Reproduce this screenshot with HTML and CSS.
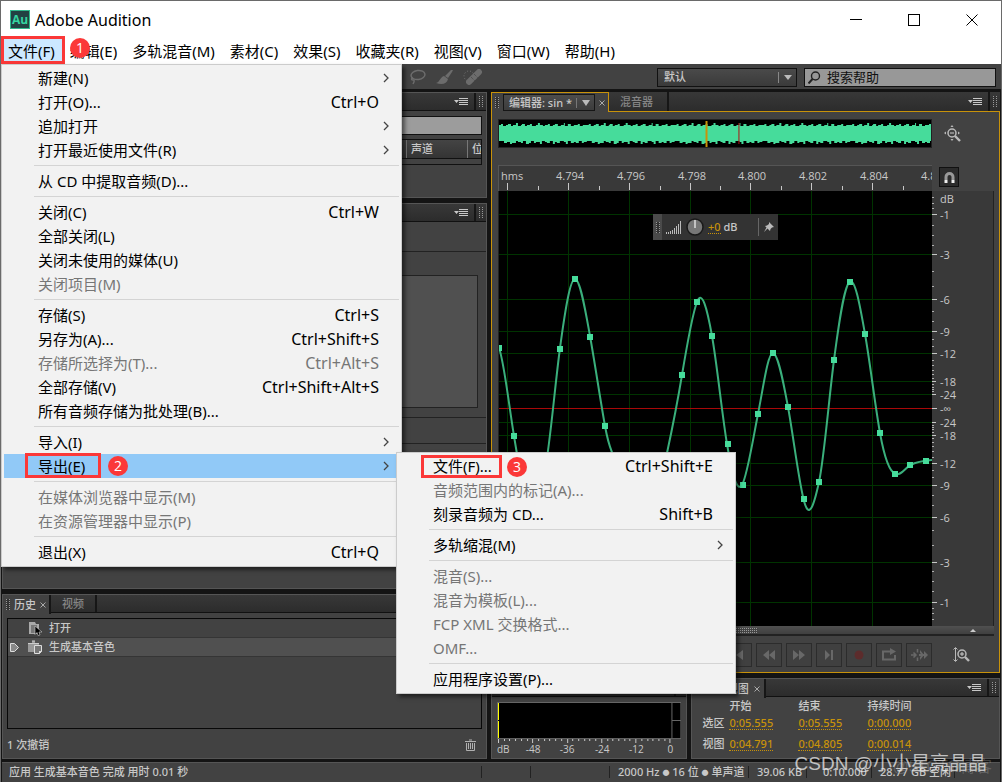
FILE: index.html
```html
<!DOCTYPE html>
<html lang="zh-CN">
<head>
<meta charset="utf-8">
<title>Adobe Audition</title>
<link rel="stylesheet" href="styles.css">
</head>
<body>
<svg class="defs" width="0" height="0" aria-hidden="true">
  <defs>
    <symbol id="panel-menu" viewBox="0 0 14 8"><path d="M0 2h5L2.500 5zM5 0h9v1H5zM5 2h9v1H5zM5 4h9v1H5zM5 6h9v1H5z" fill="#c8c8c8"/></symbol>
    <symbol id="arrow" viewBox="0 0 6 10"><path d="M1 1l4 4-4 4" fill="none" stroke="#444" stroke-width="1.300"/></symbol>
    <symbol id="close" viewBox="0 0 6 6"><path d="M.5.500l5 5m0-5l-5 5" stroke="#aaa" fill="none"/></symbol>
  </defs>
</svg>
<div class="window">
  <header class="titlebar">
    <span class="logo">Au</span>
    <h1 class="title">Adobe Audition</h1>
    <div class="captions">
      <button class="caption" aria-label="最小化"><svg width="12" height="12"><path d="M0 5.500h12" stroke="#000"/></svg></button>
      <button class="caption" aria-label="最大化"><svg width="12" height="12"><rect x=".5" y=".5" width="11" height="11" fill="none" stroke="#000"/></svg></button>
      <button class="caption" aria-label="关闭"><svg width="12" height="12"><path d="M.5.500l11 11m0-11l-11 11" stroke="#000" fill="none"/></svg></button>
    </div>
  </header>

  <nav class="menubar">
    <button class="menu-title open">文件(F)</button>
    <button class="menu-title">编辑(E)</button>
    <button class="menu-title">多轨混音(M)</button>
    <button class="menu-title">素材(C)</button>
    <button class="menu-title">效果(S)</button>
    <button class="menu-title">收藏夹(R)</button>
    <button class="menu-title">视图(V)</button>
    <button class="menu-title">窗口(W)</button>
    <button class="menu-title">帮助(H)</button>
    <span class="badge badge-one">1</span>

    <ul class="menu file-menu">
      <li><button class="item">新建(N)<svg class="more" width="6" height="10"><use href="#arrow"/></svg></button></li>
      <li><button class="item">打开(O)...<kbd>Ctrl+O</kbd></button></li>
      <li><button class="item">追加打开<svg class="more" width="6" height="10"><use href="#arrow"/></svg></button></li>
      <li><button class="item">打开最近使用文件(R)<svg class="more" width="6" height="10"><use href="#arrow"/></svg></button></li>
      <li class="separator"></li>
      <li><button class="item">从 CD 中提取音频(D)...</button></li>
      <li class="separator"></li>
      <li><button class="item">关闭(C)<kbd>Ctrl+W</kbd></button></li>
      <li><button class="item">全部关闭(L)</button></li>
      <li><button class="item">关闭未使用的媒体(U)</button></li>
      <li><button class="item" disabled>关闭项目(M)</button></li>
      <li class="separator"></li>
      <li><button class="item">存储(S)<kbd>Ctrl+S</kbd></button></li>
      <li><button class="item">另存为(A)...<kbd>Ctrl+Shift+S</kbd></button></li>
      <li><button class="item" disabled>存储所选择为(T)...<kbd>Ctrl+Alt+S</kbd></button></li>
      <li><button class="item">全部存储(V)<kbd>Ctrl+Shift+Alt+S</kbd></button></li>
      <li><button class="item">所有音频存储为批处理(B)...</button></li>
      <li class="separator"></li>
      <li><button class="item">导入(I)<svg class="more" width="6" height="10"><use href="#arrow"/></svg></button></li>
      <li class="parent">
        <button class="item selected">导出(E)<svg class="more" width="6" height="10"><use href="#arrow"/></svg></button>
        <span class="mark mark-export"></span><span class="badge badge-two">2</span>
        <ul class="menu export-menu">
          <li class="parent"><button class="item">文件(F)...<kbd>Ctrl+Shift+E</kbd></button>
            <span class="mark mark-file"></span><span class="badge badge-three">3</span></li>
          <li><button class="item" disabled>音频范围内的标记(A)...</button></li>
          <li><button class="item">刻录音频为 CD...<kbd>Shift+B</kbd></button></li>
          <li class="separator"></li>
          <li><button class="item">多轨缩混(M)<svg class="more" width="6" height="10"><use href="#arrow"/></svg></button></li>
          <li class="separator"></li>
          <li><button class="item" disabled>混音(S)...</button></li>
          <li><button class="item" disabled>混音为模板(L)...</button></li>
          <li><button class="item" disabled>FCP XML 交换格式...</button></li>
          <li><button class="item" disabled>OMF...</button></li>
          <li class="separator"></li>
          <li><button class="item">应用程序设置(P)...</button></li>
        </ul>
      </li>
      <li class="separator"></li>
      <li><button class="item" disabled>在媒体浏览器中显示(M)</button></li>
      <li><button class="item" disabled>在资源管理器中显示(P)</button></li>
      <li class="separator"></li>
      <li><button class="item">退出(X)<kbd>Ctrl+Q</kbd></button></li>
    </ul>
  </nav>

  <div class="toolbar">
    <div class="tools">
      <button class="tool" aria-label="套索"><svg width="18" height="16"><ellipse cx="9" cy="6" rx="7" ry="4.500" fill="none" stroke="#6c6c6c" stroke-width="1.500" transform="rotate(-8 9 6)"/><path d="M4 9c-2 0-2 2 0 2s1 2 0 4" fill="none" stroke="#6c6c6c" stroke-width="1.500"/></svg></button>
      <button class="tool" aria-label="画笔"><svg width="18" height="16"><path d="M17 1l-1 2-4 6-3-2 6-6zM8 7l4 3c-1 5-6 6-12 4 4-1 4-6 8-7z" fill="#6c6c6c"/></svg></button>
      <button class="tool" aria-label="修复"><svg width="20" height="16"><circle cx="6" cy="7" r="5" fill="none" stroke="#777" stroke-dasharray="1 2"/><rect x="1" y="5" width="20" height="6" rx="3" fill="#6c6c6c" transform="rotate(-45 11 8)"/><path d="M8 8l4 4M11 5l4 4" stroke="#444" stroke-dasharray="1 1"/></svg></button>
    </div>
    <div class="workspace-pick">
      <select class="workspace-select" aria-label="工作区"><option>默认</option></select>
    </div>
    <label class="search"><svg width="13" height="13"><circle cx="7.500" cy="5" r="4" fill="none" stroke="#222" stroke-width="1.400"/><path d="M4.500 8L.5 12.500" stroke="#222" stroke-width="2"/></svg><input class="search-box" type="text" value="搜索帮助" aria-label="搜索帮助"></label>
  </div>

  <main class="workspace">
    <div class="side">
      <section class="panel files">
        <div class="tabs"><span class="tab-space"></span><button class="panel-menu" aria-label="面板菜单"><svg width="14" height="8"><use href="#panel-menu"/></svg></button><span class="grip-cell"><i class="grip"></i></span></div>
        <div class="files-body">
          <input class="filter" type="text" aria-label="筛选">
          <div class="list-head"><span class="col">声道</span><span class="col last">位</span></div>
          <div class="list-foot"></div>
        </div>
      </section>
      <section class="panel media">
        <div class="tabs"><span class="tab-space"></span><button class="panel-menu" aria-label="面板菜单"><svg width="14" height="8"><use href="#panel-menu"/></svg></button><span class="grip-cell"><i class="grip"></i></span></div>
        <div class="media-body">
          <div class="media-bar"></div>
          <div class="media-view"></div>
          <div class="media-bar"></div>
          <div class="media-rest"></div>
        </div>
      </section>
      <section class="panel history">
        <div class="tabs">
          <button class="tab current"><i class="grip"></i>历史<svg width="6" height="6"><use href="#close"/></svg></button>
          <button class="tab plain">视频</button>
          <span class="tab-space"></span>
        </div>
        <div class="history-body">
          <ul class="history-list">
            <li class="step"><span class="pointer"></span><svg width="15" height="15"><path d="M1 1h6l1 2h3v10H1z" fill="#aaa"/><path d="M3 5h6M3 7h6M3 9h5M3 11h5" stroke="#444"/><path d="M7 5l7 6h-3l1 3-2 .5-1-3-2 2z" fill="#000" stroke="#ccc" stroke-width=".6"/></svg>打开</li>
            <li class="step active"><svg class="pointer" width="9" height="9"><path d="M.5.500h4l4 4-4 4h-4z" fill="#888" stroke="#ddd"/></svg><svg width="15" height="15"><path d="M0 3h4V1h3v2h4v9H0z" fill="#999"/><path d="M0 3.500h11M4 1h3" stroke="#ccc"/><path d="M6.500 5.500h7v6l-2 2h-5z" fill="#777" stroke="#ddd"/><path d="M11 14v-3h3" fill="#ddd"/></svg>生成基本音色</li>
          </ul>
          <div class="history-foot"><span>1 次撤销</span><button class="trash" aria-label="删除"><svg width="11" height="12"><path d="M0 2.500h11M4 1h3M1.500 4v7.500h8V4M3.500 4v6M5.500 4v6M7.500 4v6" fill="none" stroke="#b0b0b0"/></svg></button></div>
        </div>
      </section>
    </div>

    <div class="stage">
      <section class="panel editor">
        <div class="tabs">
          <div class="editor-tab"><i class="grip"></i><button class="editor-name">编辑器: sin *<span class="drop"><span class="caret"></span></span></button><svg width="6" height="6"><use href="#close"/></svg></div>
          <button class="tab mixer">混音器</button>
          <span class="tab-space"></span>
          <button class="panel-menu" aria-label="面板菜单"><svg width="14" height="8"><use href="#panel-menu"/></svg></button><span class="grip-cell"><i class="grip"></i></span>
        </div>
        <div class="editor-body">
          <div class="overview">
            <svg class="fill" viewBox="0 0 433 27" preserveAspectRatio="none">
              <defs><pattern id="noise" width="88" height="27" patternUnits="userSpaceOnUse"><path fill="#46dc9b" d="M0 5h2V4h2v2h3V5h2V4h3v2h2V5h3V3h2v3h3V5h1V4h3v2h2V5h3V4h2v2h4V5h2V3h2v2h3v1h2V5h3V4h2v2h3V5h2V4h3v2h3V5h3V3h1v3h3V4h3v2h3V5h4V4h2v2h3V5h4v17h-3v1h-2v-2h-3v2h-3v-1h-2v1h-3v-2h-3v3h-2v-2h-2v-1h-4v2h-3v-1h-2v2h-2v-3h-3v2h-3v-1h-2v-1h-3v3h-2v-2h-4v1h-2v-2h-3v2h-2v1h-3v-3h-3v2h-2v-1h-3v-1h-2v2h-4v1h-2v-2h-3v1h-3V21H0z"/></pattern></defs>
              <rect width="433" height="27" fill="url(#noise)"/><path d="M240.500 3v21" stroke="#b01010"/><path d="M208 1v26" stroke="#c8920a" stroke-width="2"/>
            </svg>
          </div>
          <button class="zoom-full" aria-label="全部缩小"><svg width="17" height="17"><circle cx="8" cy="8" r="4" fill="none" stroke="#bbb" stroke-width="1.500"/><path d="M6 8h4" stroke="#ccc"/><path d="M11 11l5 5" stroke="#bbb" stroke-width="2.400"/><path d="M6.500 2h3L8 0zM6.500 14h3L8 16zM2 6.500v3L0 8zM14 6.500v3L16 8z" fill="#bbb"/></svg></button>
          <div class="ruler">
            <svg class="fill" viewBox="499 166 433 25" preserveAspectRatio="xMinYMin slice">
              <path d="M507.500 183v7M568.500 183v7M629.500 183v7M690.500 183v7M750.500 183v7M811.500 183v7M872.500 183v7M538.500 186v4M599.500 186v4M660.500 186v4M720.500 186v4M781.500 186v4M842.500 186v4M903.500 186v4" stroke="#c8c8c8"/>
              <g class="axis"><text x="501" y="180">hms</text><text x="556" y="180">4.794</text><text x="617" y="180">4.796</text><text x="678" y="180">4.798</text><text x="738" y="180">4.800</text><text x="799" y="180">4.802</text><text x="860" y="180">4.804</text><text x="921" y="180">4.806</text></g>
            </svg>
          </div>
          <button class="snap" aria-label="吸附"><svg width="11" height="11"><path d="M2 8V5a3.500 3.500 0 0 1 7 0v3" fill="none" stroke="#999" stroke-width="3"/><path d="M.5 9.500h3M7.500 9.500h3" stroke="#eee" stroke-width="3"/></svg></button>
          <div class="plot">
            <svg class="fill" viewBox="499 191 433 435" preserveAspectRatio="none">
              <path d="M507.500 191v436M568.500 191v436M629.500 191v436M690.500 191v436M750.500 191v436M811.500 191v436M872.500 191v436M499 214.500h433M499 254.500h433M499 299.500h433M499 331.500h433M499 353.500h433M499 381.500h433M499 394.500h433M499 422.500h433M499 435.500h433M499 463.500h433M499 485.500h433M499 517.500h433M499 562.500h433M499 602.500h433" stroke="#003300"/>
              <path d="M499 408.500h433" stroke="#a80808"/>
              <path fill="none" stroke="#3aaf7c" stroke-width="2" d="M499 348C504 361 509 406 514 436S524 500 529 505S540 495 545 470S555 385 560 348S570 279 575 279S585 308 590 336S600 398 605 426S616 460 621 468S641 486 651 485S664 467 667 453S677 405 682 375S692 315 697 302C702 289 707 308 712 336S722 414 727 444S737 493 742 485S753 439 758 414S768 352 773 353S783 380 788 407S798 476 803.500 499S814 505 819 482S829 398 834 360S844 287 849.500 282S860 306 865 334S875 405 880 433S890 472 895.500 474S905 468 910.500 465S920 461 932 460"/>
              <path fill="#46dc9b" d="M499 345h3v6h-3zM511 433h6v6h-6zM557 346h6v6h-6zM572 276h6v6h-6zM587 334h6v6h-6zM602 423h6v6h-6zM679 372h6v6h-6zM694 299h6v6h-6zM709 333h6v6h-6zM725 441h6v6h-6zM740 482h6v6h-6zM755 411h6v6h-6zM770 350h6v6h-6zM785 404h6v6h-6zM801 496h6v6h-6zM816 479h6v6h-6zM831 357h6v6h-6zM847 279h6v6h-6zM862 331h6v6h-6zM877 430h6v6h-6zM892 471h6v6h-6zM907 462h6v6h-6zM923 458h6v6h-6z"/>
            </svg>
            <div class="hud">
              <span class="hud-grip"><i class="grip"></i></span>
              <svg width="16" height="13"><path d="M.5 11v2M2.500 11v2M4.500 10v3M6.500 9v4M8.500 7v6M10.500 5v8M12.500 3v10M14.500 0v13" stroke="#bbb"/></svg>
              <svg width="18" height="18"><circle cx="9" cy="9" r="8" fill="#777" stroke="#1a1a1a" stroke-width="1.500"/><path d="M9 2v8" stroke="#ddd" stroke-width="1.500"/></svg>
              <span class="gain"><button class="value">+0</button> dB</span>
              <button class="pin" aria-label="固定"><svg width="10" height="10"><path d="M5 0l5 5-2 .5-1.500 1.500L6 9 3.500 6.500 0 10l2.500-4.500L1 4l2-.5L5 2z" fill="#bbb"/></svg></button>
            </div>
          </div>
          <div class="scale">
            <svg class="fill" viewBox="932 191 61 435" preserveAspectRatio="xMinYMin meet">
              <path stroke="#c8c8c8" d="M932 214.500h5M932 254.500h5M932 299.500h5M932 331.500h5M932 353.500h5M932 381.500h4M932 394.500h4M932 408.500h5M932 422.500h4M932 435.500h4M932 463.500h5M932 485.500h5M932 517.500h5M932 562.500h5M932 602.500h5"/>
              <path stroke="#b0b0b0" d="M932 197.500h2M932 203.500h2M932 208.500h2M932 225.500h2M932 235.500h2M932 245.500h2M932 271.500h2M932 286.500h2M932 311.500h2M932 321.500h2M932 339.500h2M932 346.500h2M932 360.500h2M932 365.500h2M932 370.500h2M932 374.500h2M932 378.500h2M932 384.500h2M932 387.500h2M932 389.500h2M932 391.500h2M932 425.500h2M932 427.500h2M932 429.500h2M932 432.500h2M932 438.500h2M932 442.500h2M932 446.500h2M932 451.500h2M932 457.500h2M932 470.500h2M932 477.500h2M932 495.500h2M932 505.500h2M932 530.500h2M932 545.500h2M932 571.500h2M932 581.500h2M932 591.500h2M932 608.500h2M932 613.500h2M932 619.500h2"/>
              <g class="axis"><text x="940" y="203">dB</text><text x="940" y="219">-1</text><text x="940" y="259">-3</text><text x="940" y="304">-6</text><text x="940" y="336">-9</text><text x="940" y="358">-12</text><text x="940" y="386">-18</text><text x="940" y="399">-24</text><text x="940" y="413">-∞</text><text x="940" y="427">-24</text><text x="940" y="440">-18</text><text x="940" y="468">-12</text><text x="940" y="490">-9</text><text x="940" y="522">-6</text><text x="940" y="567">-3</text><text x="940" y="607">-1</text></g>
            </svg>
          </div>
          <div class="hscroll"><i class="dots"></i><span class="up"></span></div>
          <div class="transport">
            <button class="key" aria-label="播放"><svg width="20" height="14"><path d="M5 1l10 6-10 6z" fill="#686868"/></svg></button>
            <button class="key" aria-label="转到开头"><svg width="20" height="14"><path d="M14 2v10L7 7zM4 2h2v10H4z" fill="#686868"/></svg></button>
            <button class="key" aria-label="快退"><svg width="20" height="14"><path d="M10 2v10L4 7zM16 2v10l-6-5z" fill="#686868"/></svg></button>
            <button class="key" aria-label="快进"><svg width="20" height="14"><path d="M4 2v10l6-5zM10 2v10l6-5z" fill="#686868"/></svg></button>
            <button class="key" aria-label="转到结尾"><svg width="20" height="14"><path d="M6 2v10l5-5zM12 2h2v10h-2z" fill="#686868"/></svg></button>
            <button class="key" aria-label="录音"><svg width="20" height="14"><circle cx="10" cy="7" r="4.500" fill="#5c2c2c"/></svg></button>
            <button class="key" aria-label="循环"><svg width="20" height="14"><path d="M8 3.500H4v8h12V7" fill="none" stroke="#686868" stroke-width="2"/><path d="M8 2.500h3V0l6 3.500L11 7V4.500H8z" fill="#686868"/></svg></button>
            <button class="key" aria-label="跳过选区"><svg width="20" height="14"><path d="M2 7h4M4.500 4.500L7 7 4.500 9.500M8.500 1v3.500M8.500 9.500V13" fill="none" stroke="#686868" stroke-width="1.500"/><path d="M10 7h5" stroke="#686868" stroke-width="2"/><path d="M11 2l4 5-4 5v-3l2-2-2-2zM15 3l4 4-4 4z" fill="#686868"/></svg></button>
            <button class="zoom-amp" aria-label="放大振幅"><svg width="17" height="16"><path d="M2.500 1v13M.5 2.500l2-2 2 2M.5 12.500l2 2 2-2" fill="none" stroke="#b8b8b8"/><circle cx="9" cy="7" r="4" fill="none" stroke="#b8b8b8" stroke-width="1.500"/><path d="M7 7h4M9 5v4" stroke="#ccc"/><path d="M12 10l4 4" stroke="#b8b8b8" stroke-width="2.400"/></svg></button>
          </div>
        </div>
      </section>

      <div class="lower">
        <section class="panel levels">
          <div class="tabs"><span class="tab-space"></span><span class="grip-cell"></span></div>
          <div class="levels-body">
            <svg class="fill" viewBox="497 702 184 54" preserveAspectRatio="xMinYMin meet">
              <rect x="497.500" y="702.500" width="183" height="36" fill="#000" stroke="#666"/>
              <path d="M671.500 703v35M671.500 720.500h9" stroke="#666"/><path d="M498.500 703v17M498.500 721v17" stroke="#ff0"/>
              <path stroke="#c8c8c8" d="M498.500 739v4M532.500 739v4M567.500 739v4M601.500 739v4M635.500 739v4M669.500 739v4M504.500 739v2M509.500 739v2M515.500 739v2M521.500 739v2M527.500 739v2M538.500 739v2M544.500 739v2M549.500 739v2M555.500 739v2M561.500 739v2M572.500 739v2M578.500 739v2M584.500 739v2M589.500 739v2M595.500 739v2M607.500 739v2M612.500 739v2M618.500 739v2M624.500 739v2M629.500 739v2M641.500 739v2M647.500 739v2M652.500 739v2M658.500 739v2M664.500 739v2"/>
              <g class="axis small"><text x="497" y="753">dB</text><text x="533" y="753" text-anchor="middle">-48</text><text x="567" y="753" text-anchor="middle">-36</text><text x="602" y="753" text-anchor="middle">-24</text><text x="636" y="753" text-anchor="middle">-12</text><text x="670" y="753" text-anchor="middle">0</text></g>
            </svg>
          </div>
        </section>
        <section class="panel times">
          <div class="tabs">
            <button class="tab current wide">选区/视图<svg width="6" height="6"><use href="#close"/></svg></button>
            <span class="tab-space"></span><button class="panel-menu" aria-label="面板菜单"><svg width="14" height="8"><use href="#panel-menu"/></svg></button><span class="grip-cell"><i class="grip"></i></span>
          </div>
          <table class="time-table">
            <thead><tr><td></td><th>开始</th><th>结束</th><th>持续时间</th></tr></thead>
            <tbody>
              <tr><th>选区</th><td><button class="value">0:05.555</button></td><td><button class="value">0:05.555</button></td><td><button class="value">0:00.000</button></td></tr>
              <tr><th>视图</th><td><button class="value">0:04.791</button></td><td><button class="value">0:04.805</button></td><td><button class="value">0:00.014</button></td></tr>
            </tbody>
          </table>
        </section>
      </div>
    </div>
  </main>

  <footer class="status">
    <span class="message">应用 生成基本音色 完成 用时 0.01 秒</span>
    <span class="cell slot-small"></span><span class="cell slot-large"></span>
    <span class="cell format">2000 Hz <i class="bullet">●</i> 16 位 <i class="bullet">●</i> 单声道</span>
    <span class="cell size">39.06 KB</span>
    <span class="cell length">0:10.000</span>
    <span class="cell free">28.77 GB 空闲</span>
    <span class="cell end"></span>
  </footer>
  <span class="watermark faint">@51CTO博客</span>
  <span class="watermark">CSDN @小小星亮晶晶</span>
</div>
</body>
</html>
```
FILE: styles.css
```css
* { box-sizing: border-box; }
body { margin: 0; font: 500 11px/16px "Noto Sans", "Noto Sans CJK SC", sans-serif; color: #c8c8c8; }
button, input, select, kbd { font: inherit; color: inherit; }
button { background: none; border: 0; padding: 0; margin: 0; text-align: left; white-space: nowrap; }
ul { list-style: none; margin: 0; padding: 0; }
svg { display: block; flex: none; }
.defs { position: absolute; }
.fill { width: 100%; height: 100%; }

.window { position: relative; display: flex; flex-direction: column; min-height: 100vh; background: #141414; border: 1px solid #6a6a6a; overflow: hidden; }

/* Title bar */
.titlebar { display: flex; align-items: center; height: 37px; padding-left: 9px; background: #fff; color: #000; }
.logo { display: flex; align-items: center; justify-content: center; width: 20px; height: 19px; background: #224242; border: 1px solid #30b88c; color: #35d3a0; font: bold 12px/16px "Open Sans", sans-serif; }
.title { margin: 0 0 0 5px; font: 16px/20px "Noto Sans", sans-serif; }
.captions { display: flex; margin-left: auto; }
.caption { display: flex; align-items: center; justify-content: center; width: 58px; height: 36px; }

/* Menus */
.menubar { position: relative; z-index: 5; display: flex; height: 26px; padding-left: 2px; background: #fff; color: #000; font: 15px/24px "Noto Sans", "Noto Sans CJK SC", sans-serif; }
.menu-title { padding: 2px 8px 0 7px; height: 24px; line-height: 22px; }
.menu-title.open { outline: 3px solid #fb3838; outline-offset: -1px; background: #cce8ff; padding: 2px 8px 0 5px; }
.badge { position: absolute; display: flex; align-items: center; justify-content: center; width: 20px; height: 20px; border-radius: 50%; background: #fb3838; color: #fff; font: 14px/20px "Open Sans", sans-serif; }
.badge-one { left: 69px; top: 0; }
.badge-two { left: 104px; top: 2px; }
.badge-three { left: 108px; top: 3px; }
.mark { position: absolute; border: 3px solid #fb3838; pointer-events: none; }
.mark-export { left: 21px; top: -1px; width: 76px; height: 25px; }
.mark-file { left: 22px; top: 1px; width: 81px; height: 23px; }
.menu { position: absolute; background: #f2f2f2; border: 1px solid #ccc; padding: 1px 2px 2px; box-shadow: 3px 3px 4px rgba(0, 0, 0, .5); }
.file-menu { left: 0; top: 26px; width: 401px; }
.export-menu { left: 392px; top: -2px; width: 340px; }
.parent { position: relative; }
.item { position: relative; display: flex; align-items: center; width: 100%; height: 24px; padding: 0 20px 0 34px; }
.item:disabled { color: #767676; }
.item.selected { background: #91c9f7; }
.item kbd { margin-left: auto; font: 16px/24px "Noto Sans", sans-serif; }
.more { position: absolute; right: 10px; top: 7px; }
.separator { height: 7px; padding: 3px 0 0 30px; }
.separator::before { content: ""; display: block; height: 1px; background: #d4d4d4; }

/* Tool bar */
.toolbar { display: flex; align-items: center; height: 25px; margin-bottom: 3px; padding: 1px 5px 0 408px; background: #424242; }
.tools { display: flex; gap: 9px; }
.tool { display: flex; }
.workspace-pick { position: relative; margin-left: auto; width: 140px; height: 19px; }
.workspace-pick::before { content: ""; position: absolute; right: 18px; top: 4px; height: 11px; border-left: 1px solid #888; }
.workspace-pick::after { content: ""; position: absolute; right: 5px; top: 7px; border: 4px solid transparent; border-top: 5px solid #bbb; }
.workspace-select { appearance: none; width: 100%; height: 19px; padding: 0 6px; border: 1px solid #111; background: linear-gradient(#4a4a4a, #3a3a3a); line-height: 16px; border-radius: 0; }
.search { display: flex; align-items: center; gap: 6px; width: 192px; height: 19px; margin-left: 7px; padding: 0 3px; border: 1px solid #111; background: #989898; color: #111; }
.search-box { width: 100%; min-width: 0; border: 0; padding: 0; background: none; font: 13px/16px "Noto Sans CJK SC", sans-serif; }

/* Panels */
.workspace { flex: 1; display: flex; gap: 4px; padding: 0 1px 3px; min-height: 0; }
.side { flex: 0 1 485px; min-width: 0; display: flex; flex-direction: column; gap: 5px; }
.stage { flex: 1 1 0; min-width: 0; display: flex; flex-direction: column; gap: 5px; }
.panel { display: flex; flex-direction: column; background: #424242; border: 1px solid #555; }
.tabs { display: flex; height: 18px; border-bottom: 1px solid #111; background: linear-gradient(#383838, #2c2c2c); }
.tab-space { flex: 1; }
.panel-menu { display: flex; align-items: center; padding: 0 6px; }
.grip-cell { display: flex; align-items: center; justify-content: center; width: 12px; border-left: 2px solid #161616; }
.grip { width: 4px; height: 11px; background: repeating-linear-gradient(#0000 0 1px, #333 1px 2px), repeating-linear-gradient(90deg, #999 0 1px, #333 1px 3px); flex: none; }
.tab { display: flex; align-items: center; gap: 4px; padding: 0 11px; border-right: 2px solid #161616; color: #858585; }
.tab.current { height: 19px; padding: 0 3px; background: #424242; color: #c8c8c8; }
.tab.wide { gap: 5px; padding: 0 4px 0 8px; }
.files { height: 106px; }
.files-body { padding: 5px 4px; }
.filter { display: block; width: 100%; height: 19px; border: 1px solid #111; background: #9c9c9c; }
.list-head { display: flex; justify-content: flex-end; height: 20px; margin-top: 4px; border: 1px solid #111; background: linear-gradient(#444, #343434); line-height: 18px; }
.col { width: 61px; padding-left: 4px; border-left: 1px solid #777; }
.col.last { width: 14px; overflow: hidden; }
.list-foot { height: 6px; border: 1px solid #111; border-top: 0; }
.media { flex: 1; }
.media-body { flex: 1; display: flex; flex-direction: column; }
.media-bar { height: 30px; border-bottom: 1px solid #222; }
.media-view { flex: none; height: 133px; margin: 23px 8px 9px; border: 1px solid #222; background: #505050; }
.media-body .media-view + .media-bar { height: 27px; border-top: 1px solid #222; }
.history { height: 165px; }
.history-body { flex: 1; display: flex; flex-direction: column; padding: 5px 4px 0; }
.history-list { flex: 1; border: 1px solid #080808; }
.step { display: flex; align-items: center; gap: 6px; height: 19px; border-bottom: 1px solid #353535; padding-left: 2px; }
.step.active { background: #505050; }
.pointer { width: 9px; margin-right: 3px; }
.history-foot { display: flex; align-items: center; justify-content: space-between; height: 29px; padding: 2px 6px 0 0; }

/* Editor */
.editor { flex: 1; border-color: #c8920a; border-top: 0; }
.editor .tabs { height: 20px; border-bottom: 1px solid #c8920a; margin-right: -1px; }
.editor-tab { display: flex; align-items: center; gap: 4px; height: 20px; margin-left: -1px; padding: 0 3px; border: 1px solid #c8920a; border-bottom: 0; background: #424242; width: 118px; flex: none; }
.editor-name { display: flex; align-items: center; justify-content: space-between; flex: 1; height: 17px; padding: 0 4px 0 5px; border: 1px solid #161616; background: linear-gradient(#4c4c4c, #3c3c3c); }
.drop { display: flex; align-items: center; height: 10px; padding-left: 5px; border-left: 1px solid #777; }
.caret { border: 4px solid transparent; border-top: 6px solid #bbb; border-bottom: 0; }
.mixer { width: 60px; }
.editor-body { flex: 1; min-height: 0; display: grid; grid-template-columns: minmax(0, 1fr) 62px; grid-template-rows: 29px 17px 26px minmax(0, 1fr) 10px 36px; padding: 7px 5px 0 6px; }
.overview { grid-row: 1; background: #000; border: 1px solid #222; overflow: hidden; }
.zoom-full { grid-row: 1; justify-self: start; align-self: center; margin-left: 12px; }
.ruler { grid-row: 3; background: #393939; border-left: 1px solid #555; border-top: 1px solid #555; overflow: hidden; }
.snap { grid-row: 3; grid-column: 2; display: flex; align-items: center; justify-content: center; width: 20px; height: 20px; margin: 2px 0 0 7px; border: 1px solid #111; background: #2c2c2c; }
.axis { fill: #c8c8c8; font: 500 11px "Open Sans", sans-serif; }
.axis.small { font-size: 10px; }
.plot { position: relative; grid-row: 4; background: #000; border-left: 1px solid #222; }
.scale { grid-row: 4; background: #393939; border-right: 1px solid #222; min-height: 0; }
.plot, .scale { overflow: hidden; }
.hud { position: absolute; left: 154px; top: 23px; display: flex; align-items: center; gap: 4px; width: 125px; height: 26px; background: #333; }
.hud-grip { display: flex; align-items: center; justify-content: center; width: 9px; height: 26px; background: #4a4a4a; }
.gain { white-space: nowrap; }
.value { color: #c8920a; border-bottom: 1px dotted #c8920a; line-height: 13px; }
.pin { margin-left: auto; padding: 4px 4px 4px 5px; border-left: 1px solid #666; }
.hscroll { position: relative; grid-row: 5; grid-column: 1 / 3; background: linear-gradient(#505050, #404040); border-bottom: 2px solid #222; }
.dots { position: absolute; left: 50%; top: 2px; width: 24px; height: 5px; margin-left: -12px; background: repeating-linear-gradient(#0000 0 1px, #444 1px 2px), repeating-linear-gradient(90deg, #999 0 1px, #444 1px 2px); }
.up { position: absolute; right: 18px; top: 3px; border: 3px solid transparent; border-top: 0; border-bottom-color: #ccc; }
.transport { grid-row: 6; grid-column: 1 / 3; display: flex; align-items: center; justify-content: flex-end; gap: 4px; padding: 2px 24px 0 0; }
.key { display: flex; align-items: center; justify-content: center; width: 26px; height: 24px; border: 1px solid #2c2c2c; background: #404040; }
.zoom-amp { margin-left: 17px; }

/* Lower panels */
.lower { display: flex; gap: 4px; height: 81px; }
.levels { flex: 196 1 0; min-width: 0; }
.levels-body { flex: 1; min-height: 0; padding: 5px 5px 0; }
.times { flex: 309 1 0; min-width: 0; }
.time-table { border-collapse: collapse; margin-left: 10px; table-layout: fixed; width: 234px; line-height: 16px; }
.time-table th, .time-table td { padding: 0; text-align: left; font-weight: 500; width: 69px; vertical-align: middle; }
.time-table tr > :first-child { width: 27px; }
.time-table thead tr { height: 18px; }
.time-table tbody tr { height: 21px; }
.time-table tbody th, .time-table tbody td { vertical-align: top; }

/* Status bar */
.status { display: flex; align-items: center; height: 21px; margin: 0 1px; padding-bottom: 3px; background: #424242; border-top: 1px solid #555; white-space: nowrap; }
.message { flex: 1; padding-left: 7px; line-height: 12px; }
.cell { flex: none; height: 12px; line-height: 12px; border-left: 1px solid #222; padding-left: 8px; }
.bullet { font-size: 7px; line-height: 8px; font-style: normal; vertical-align: 1px; }
.slot-small { width: 49px; }
.slot-large { width: 79px; }
.format { width: 139px; }
.size { width: 58px; }
.length { width: 65px; padding-left: 16px; }
.free { width: 83px; }
.end { width: 46px; }
.watermark { position: absolute; z-index: 6; right: 14px; bottom: 7px; color: rgba(235, 235, 235, .75); font: 19px/24px "Liberation Sans", "Noto Sans CJK SC", sans-serif; white-space: nowrap; }
.watermark.faint { right: 9px; bottom: 4px; color: rgba(180, 180, 180, .3); font-size: 16px; }
```
